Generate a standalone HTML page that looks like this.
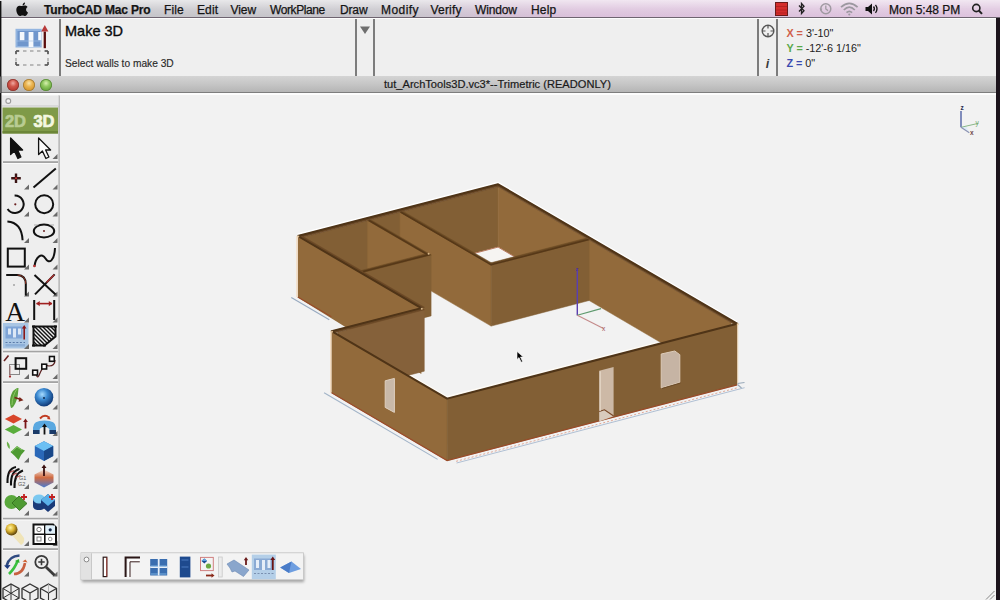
<!DOCTYPE html>
<html><head><meta charset="utf-8">
<style>
*{margin:0;padding:0;box-sizing:border-box}
html,body{width:1000px;height:600px;overflow:hidden;background:#f2f2f2;font-family:"Liberation Sans",sans-serif;position:relative}
.abs{position:absolute}
#menubar{left:0;top:0;width:1000px;height:18px;background:linear-gradient(rgba(255,255,255,0.6),rgba(255,255,255,0.15) 55%,rgba(255,255,255,0) 90%),linear-gradient(to right,#c6c6ca 0%,#c8c6cc 40%,#d2c2d4 48%,#dcc2dc 58%,#dec4de 100%);border-bottom:1px solid #6e6470}
#menubar .m{position:absolute;top:3px;font-size:12px;color:#141414;white-space:nowrap;letter-spacing:-0.4px;-webkit-text-stroke:0.25px #141414}
#opts{left:0;top:18px;width:1000px;height:58.3px;background:#efefef;border-top:1px solid #fcfcfc}
#title{left:0;top:76.3px;width:1000px;height:16.7px;background:linear-gradient(#d4d4d4,#c6c6c6 50%,#b5b5b5);border-bottom:1px solid #7e7e7e}
#canvas{left:0;top:93px;width:1000px;height:507px;background:#f2f2f2;border-top:2px solid #fdfdfd}
.vline{position:absolute;width:1.6px;background:#7c7c7c}
.tl{position:absolute;top:78.5px;width:12px;height:12px;border-radius:50%}
</style></head>
<body>
<div id="canvas" class="abs"></div>
<svg class="abs" style="left:0;top:0" width="1000" height="600" viewBox="0 0 1000 600">
<polyline points="297.8,234.1 498.1,182.4 737.1,321.8" fill="none" stroke="#ffffff" stroke-width="1.3" stroke-linejoin="round"/>
<polyline points="447.1,396.7 407.6,373.7" fill="none" stroke="#fffcf6" stroke-width="1.3" />
<polyline points="447.1,396.7 657.1,342.5" fill="none" stroke="#fffcf6" stroke-width="1.2" />
<polygon points="300.8,237.8 498.1,186.8 498.1,247.1 300.8,298.7" fill="#825f35" stroke="#825f35" stroke-width="0.5"/>
<polygon points="498.1,186.8 731.1,322.8 731.1,383.8 498.1,247.1" fill="#926a3b" stroke="#926a3b" stroke-width="0.5"/>
<polygon points="403.1,272.0 498.1,247.1 586.1,298.8 491.1,323.6" fill="#f6f4f2" stroke="#b87a60" stroke-width="1"/>
<polygon points="400.1,212.1 491.1,265.2 491.1,326.1 400.1,272.8" fill="#926a3b" stroke="#926a3b" stroke-width="0.5"/>
<polygon points="400.1,212.1 491.1,265.2 494.1,264.4 403.1,211.4" fill="#6a4a24" stroke="#6a4a24" stroke-width="0.5"/>
<polygon points="491.1,265.2 589.1,239.9 589.1,300.5 491.1,326.1" fill="#825f35" stroke="#825f35" stroke-width="0.5"/>
<polygon points="488.1,263.5 491.1,265.2 589.1,239.9 586.1,238.2" fill="#6a4a24" stroke="#6a4a24" stroke-width="0.5"/>
<polygon points="367.7,220.5 428.1,255.7 428.1,316.7 367.7,281.2" fill="#926a3b" stroke="#926a3b" stroke-width="0.5"/>
<polygon points="367.7,220.5 428.1,255.7 431.1,255.0 370.7,219.7" fill="#6a4a24" stroke="#6a4a24" stroke-width="0.5"/>
<polygon points="364.2,272.2 431.1,255.0 431.1,315.9 364.2,333.4" fill="#825f35" stroke="#825f35" stroke-width="0.5"/>
<polygon points="361.2,270.5 364.2,272.2 431.1,255.0 428.1,253.2" fill="#6a4a24" stroke="#6a4a24" stroke-width="0.5"/>
<polygon points="297.8,236.0 421.3,308.1 421.3,373.9 297.8,297.5" fill="#926a3b" />
<polygon points="337.6,332.2 424.3,309.8 424.3,371.2 337.6,393.8" fill="#85613a" stroke="#85613a" stroke-width="0.5"/>
<polygon points="331.6,331.2 447.1,398.6 447.1,460.6 331.6,392.8" fill="#926a3b" stroke="#926a3b" stroke-width="0.5"/>
<polygon points="447.1,398.6 737.1,323.7 737.1,384.8 447.1,460.6" fill="#825f35" stroke="#825f35" stroke-width="0.5"/>
<polygon points="297.8,236.0 300.8,237.8 501.1,186.1 498.1,184.3" fill="#6a4826" stroke="#6a4826" stroke-width="0.5"/>
<polygon points="495.1,185.1 734.1,324.5 737.1,323.7 498.1,184.3" fill="#6a4826" stroke="#6a4826" stroke-width="0.5"/>
<polygon points="297.8,236.0 421.3,308.1 424.3,307.3 300.8,235.2" fill="#6a4826" stroke="#6a4826" stroke-width="0.5"/>
<polygon points="331.6,331.2 334.6,333.0 424.3,309.8 421.3,308.1" fill="#6a4826" stroke="#6a4826" stroke-width="0.5"/>
<polyline points="297.8,236.0 498.1,184.3 737.1,323.7 447.1,398.6 331.6,331.2 421.3,308.1 297.8,236.0" fill="none" stroke="#4f3417" stroke-width="2.0" stroke-linejoin="round"/>
<polyline points="400.6,212.0 491.1,264.8 588.6,239.6" fill="none" stroke="#563818" stroke-width="1.5" />
<polyline points="368.7,220.2 428.1,254.9 363.2,271.6" fill="none" stroke="#563818" stroke-width="1.6" />
<circle cx="298.3" cy="236.6" r="1.0" fill="#d8b88c"/>
<circle cx="428.6" cy="253.8" r="1.0" fill="#d8b88c"/>
<circle cx="421.8" cy="308.7" r="1.0" fill="#d8b88c"/>
<circle cx="332.1" cy="331.8" r="1.0" fill="#d8b88c"/>
<circle cx="737.6" cy="324.3" r="1.0" fill="#d8b88c"/>
<polyline points="297.0,236.0 297.0,297.0" fill="none" stroke="#f4dcc0" stroke-width="1.4" />
<polyline points="330.8,331.2 330.8,392.8" fill="none" stroke="#f4dcc0" stroke-width="1.4" />
<polyline points="737.7,323.7 737.7,384.8" fill="none" stroke="#e8d0b0" stroke-width="1.0" />
<polyline points="297.8,297.0 331.3,316.6" fill="none" stroke="#9a4a28" stroke-width="1.1" />
<polyline points="331.6,392.8 447.1,460.6 737.1,384.8" fill="none" stroke="#9a4a28" stroke-width="1.2" />
<polyline points="291.3,297.5 329.3,319.8" fill="none" stroke="#98aac0" stroke-width="1.1" />
<polyline points="324.1,392.8 437.6,459.4" fill="none" stroke="#a2b4c8" stroke-width="1.1" />
<polyline points="456.1,461.3 738.1,387.6" fill="none" stroke="#e0a898" stroke-width="1.0" stroke-dasharray="2,2"/>
<polyline points="456.6,463.0 744.6,387.7" fill="none" stroke="#b0c0d4" stroke-width="1.0" />
<polyline points="737.5,383.5 744.5,382.5" fill="none" stroke="#98a8b8" stroke-width="1.1" />
<polyline points="737.5,384.5 741.5,388.0" fill="none" stroke="#98a8b8" stroke-width="1.1" />
<polygon points="599.2,370.8 613.6,367.0 613.6,415.8 604.5,409.5 599.2,411.0" fill="#cdb9a6" />
<polygon points="599.2,411.0 604.5,409.5 613.6,415.8 613.6,416.2 599.2,421.6" fill="#d9cbbd" />
<polyline points="599.2,411.5 604.5,409.8 613.6,416.0" fill="none" stroke="#7a4a2a" stroke-width="1.2" />
<polyline points="600.2,371.2 600.2,411.0" fill="none" stroke="#e6d8c8" stroke-width="1.2" />
<polygon points="661.2,354.0 674.8,351.0 679.8,354.7 679.8,382.4 661.2,387.8" fill="#c6b4a4" stroke="#dccbb8" stroke-width="1"/>
<polyline points="662.0,388.5 680.5,383.0" fill="none" stroke="#6a4a28" stroke-width="1.0" />
<polygon points="385.2,380.8 394.4,378.4 394.4,412.4 385.2,407.4" fill="#c9b9a9" stroke="#dfd0c0" stroke-width="1"/>
<line x1="577.3" y1="315.5" x2="577.3" y2="268.5" stroke="#5a3fb0" stroke-width="1.4"/>
<line x1="577.3" y1="315.3" x2="601" y2="308.6" stroke="#5e9a6e" stroke-width="1.1"/>
<line x1="577.3" y1="315.3" x2="603" y2="328.2" stroke="#c48a8a" stroke-width="1.1"/>
<text x="575.5" y="271" font-family="Liberation Sans" font-size="6" fill="#4a3090">z</text>
<text x="602" y="330.5" font-family="Liberation Sans" font-size="6.5" fill="#a05050">x</text>
<polygon points="517,351.5 517,359.5 519,357.6 521.2,362.2 522.6,361.5 520.5,357 523.3,357" fill="#000" stroke="#fff" stroke-width="0.6"/>

</svg>
<div id="menubar" class="abs">
  <svg class="abs" style="left:16px;top:2px" width="13" height="15" viewBox="0 0 13 15"><path d="M9 0.5c0.2 1.3-0.9 2.9-2.4 2.9C6.4 2 7.6 0.7 9 0.5z M6.3 4.1c0.8 0 1.6-0.6 2.6-0.6 0.6 0 1.9 0.2 2.7 1.5-2.2 1.3-1.9 4.5 0.4 5.4-0.5 1.4-1.6 3.6-3 3.6-1 0-1.3-0.6-2.5-0.6-1.3 0-1.6 0.6-2.6 0.6C2.2 14 0.3 10.6 0.3 7.8c0-2.6 1.7-4 3.3-4 1.1 0 1.9 0.3 2.7 0.3z" fill="#111"/></svg>
  <div class="m" style="left:44px;font-weight:bold;letter-spacing:-0.17px">TurboCAD Mac Pro</div>
  <div class="m" style="left:164px;letter-spacing:0.1px">File</div>
  <div class="m" style="left:197px;letter-spacing:0.1px">Edit</div>
  <div class="m" style="left:230.5px;letter-spacing:-0.05px">View</div>
  <div class="m" style="left:270px">WorkPlane</div>
  <div class="m" style="left:340px;letter-spacing:-0.15px">Draw</div>
  <div class="m" style="left:381px;letter-spacing:0.45px">Modify</div>
  <div class="m" style="left:430.5px;letter-spacing:0.2px">Verify</div>
  <div class="m" style="left:475px;letter-spacing:-0.15px">Window</div>
  <div class="m" style="left:531px;letter-spacing:0.2px">Help</div>
  <div class="m" style="left:889px;letter-spacing:0px">Mon 5:48 PM</div>
</div>
<div id="opts" class="abs">
  <div class="vline" style="left:59px;top:0;height:58px"></div>
  <div class="vline" style="left:355px;top:0;height:58px"></div>
  <div class="vline" style="left:373px;top:0;height:58px"></div>
  <div class="vline" style="left:757px;top:0;height:58px"></div>
  <div class="vline" style="left:776px;top:0;height:58px"></div>
  <div class="abs" style="left:65px;top:3.5px;font-size:14.5px;color:#0a0a0a;-webkit-text-stroke:0.35px #0a0a0a">Make 3D</div>
  <div class="abs" style="left:65px;top:38.5px;font-size:10.2px;color:#2a2a2a;-webkit-text-stroke:0.15px #2a2a2a">Select walls to make 3D</div>
</div>
<div id="title" class="abs">
  <div class="abs" style="left:384px;top:2px;font-size:11.1px;color:#1a1a1a;-webkit-text-stroke:0.2px #1a1a1a">tut_ArchTools3D.vc3*--Trimetric (READONLY)</div>
</div>
<svg class="abs" style="left:0;top:0" width="1000" height="600" viewBox="0 0 1000 600">
<rect x="1.5" y="95.5" width="57.5" height="505" fill="#eeeeee"/>
<rect x="58.5" y="95.5" width="1.2" height="505" fill="#a6a6a6"/>
<rect x="2" y="96" width="56.5" height="10" fill="#e8e8e8"/>
<rect x="2" y="105.5" width="56.5" height="1" fill="#c8c8c8"/>
<circle cx="8.3" cy="101" r="2.4" fill="#f4f4f4" stroke="#9a9a9a" stroke-width="1.1"/>
<rect x="2.5" y="107.5" width="55.5" height="26" fill="#7f9a48"/>
<rect x="2.5" y="131" width="55.5" height="2.5" fill="#6c8638"/>
<text x="5" y="127" font-family="Liberation Sans" font-weight="bold" font-size="16.5" fill="#b9cc92" stroke="#b9cc92" stroke-width="0.7" letter-spacing="-0.3">2D</text>
<text x="33.5" y="127" font-family="Liberation Sans" font-weight="bold" font-size="16.5" fill="#f4f8e0" stroke="#f4f8e0" stroke-width="0.7" letter-spacing="-0.3">3D</text>
<rect x="3" y="161.2" width="55" height="1.8" fill="#a4a4a4"/>
<rect x="3" y="163.0" width="55" height="1" fill="#fafafa"/>
<rect x="3" y="350.8" width="55" height="1.8" fill="#a4a4a4"/>
<rect x="3" y="352.6" width="55" height="1" fill="#fafafa"/>
<rect x="3" y="381.2" width="55" height="1.8" fill="#a4a4a4"/>
<rect x="3" y="383.0" width="55" height="1" fill="#fafafa"/>
<rect x="3" y="517.8" width="55" height="1.8" fill="#a4a4a4"/>
<rect x="3" y="519.5999999999999" width="55" height="1" fill="#fafafa"/>
<rect x="3" y="548.2" width="55" height="1.8" fill="#a4a4a4"/>
<rect x="3" y="550.0" width="55" height="1" fill="#fafafa"/>
<rect x="3" y="323" width="25.5" height="25.5" fill="#a9c6e4"/>
<polygon points="57.5,159 52.5,159 57.5,154" fill="#6a6a6a"/>
<polygon points="29,189.5 24,189.5 29,184.5" fill="#6a6a6a"/>
<polygon points="57.5,189.5 52.5,189.5 57.5,184.5" fill="#6a6a6a"/>
<polygon points="29,216.5 24,216.5 29,211.5" fill="#6a6a6a"/>
<polygon points="57.5,216.5 52.5,216.5 57.5,211.5" fill="#6a6a6a"/>
<polygon points="29,243 24,243 29,238" fill="#6a6a6a"/>
<polygon points="57.5,243 52.5,243 57.5,238" fill="#6a6a6a"/>
<polygon points="29,269.5 24,269.5 29,264.5" fill="#6a6a6a"/>
<polygon points="57.5,269.5 52.5,269.5 57.5,264.5" fill="#6a6a6a"/>
<polygon points="29,296.5 24,296.5 29,291.5" fill="#6a6a6a"/>
<polygon points="57.5,296.5 52.5,296.5 57.5,291.5" fill="#6a6a6a"/>
<polygon points="29,322.5 24,322.5 29,317.5" fill="#6a6a6a"/>
<polygon points="57.5,322.5 52.5,322.5 57.5,317.5" fill="#6a6a6a"/>
<polygon points="29,349 24,349 29,344" fill="#6a6a6a"/>
<polygon points="57.5,349 52.5,349 57.5,344" fill="#6a6a6a"/>
<polygon points="29,379 24,379 29,374" fill="#6a6a6a"/>
<polygon points="57.5,379 52.5,379 57.5,374" fill="#6a6a6a"/>
<polygon points="29,409.5 24,409.5 29,404.5" fill="#6a6a6a"/>
<polygon points="57.5,409.5 52.5,409.5 57.5,404.5" fill="#6a6a6a"/>
<polygon points="29,436 24,436 29,431" fill="#6a6a6a"/>
<polygon points="57.5,436 52.5,436 57.5,431" fill="#6a6a6a"/>
<polygon points="29,462.5 24,462.5 29,457.5" fill="#6a6a6a"/>
<polygon points="57.5,462.5 52.5,462.5 57.5,457.5" fill="#6a6a6a"/>
<polygon points="29,489 24,489 29,484" fill="#6a6a6a"/>
<polygon points="57.5,489 52.5,489 57.5,484" fill="#6a6a6a"/>
<polygon points="29,515.5 24,515.5 29,510.5" fill="#6a6a6a"/>
<polygon points="57.5,515.5 52.5,515.5 57.5,510.5" fill="#6a6a6a"/>
<polygon points="29,546 24,546 29,541" fill="#6a6a6a"/>
<polygon points="57.5,546 52.5,546 57.5,541" fill="#6a6a6a"/>
<polygon points="29,576.5 24,576.5 29,571.5" fill="#6a6a6a"/>
<polygon points="57.5,576.5 52.5,576.5 57.5,571.5" fill="#6a6a6a"/>
<rect x="0" y="1" width="1.4" height="599" fill="#111"/>
<rect x="0" y="76.5" width="1.4" height="16.5" fill="#6a6a6a"/>
<polygon points="10.6,138.0 10.6,154.5 14.4,151.0 17.9,158.5 20.9,157.0 17.6,150.0 22.6,150.0" fill="#111" stroke="#111" stroke-width="1.3" stroke-linejoin="round"/>
<polygon points="38.6,138.0 38.6,154.5 42.4,151.0 45.9,158.5 48.9,157.0 45.6,150.0 50.6,150.0" fill="#fafafa" stroke="#111" stroke-width="1.3" stroke-linejoin="round"/>
<path d="M11.2,178.2H20.8M16,173.4V183" stroke="#3a1414" stroke-width="2.4"/>
<circle cx="16" cy="178.2" r="1" fill="#d03030"/>
<line x1="33.5" y1="187.4" x2="55.8" y2="168.6" stroke="#111" stroke-width="2"/>
<path d="M14.6,195.6 A8.7,8.7 0 1 1 7.6,209" fill="none" stroke="#111" stroke-width="2"/>
<circle cx="15.3" cy="204.3" r="1.1" fill="#6a2020"/>
<circle cx="44.2" cy="204.2" r="9" fill="none" stroke="#111" stroke-width="2"/>
<path d="M7.4,221.6 Q21.5,222.5 22.6,240.2" fill="none" stroke="#111" stroke-width="2"/>
<ellipse cx="44" cy="231" rx="10.2" ry="6.4" fill="none" stroke="#111" stroke-width="2"/>
<circle cx="44" cy="231" r="1" fill="#6a2020"/>
<path d="M34,225H38M50,225H54" stroke="#999" stroke-width="0.8"/>
<rect x="7.8" y="248.6" width="17" height="18" fill="none" stroke="#111" stroke-width="2"/>
<path d="M34.4,266.6 C35.8,256 42,252.5 45.5,258.5 C49,264.5 54.5,261 55,248" fill="none" stroke="#111" stroke-width="2"/>
<circle cx="34.4" cy="266" r="1.2" fill="#c03030"/>
<path d="M6.2,275 H17.5 Q25.8,275.5 25.8,284 V295.6" fill="none" stroke="#111" stroke-width="2"/>
<path d="M17.5,275 Q25.8,275.5 25.8,284" fill="none" stroke="#8a3020" stroke-width="1"/>
<circle cx="14" cy="285" r="0.7" fill="#555"/>
<line x1="34.5" y1="275" x2="55.6" y2="294.5" stroke="#111" stroke-width="2"/>
<line x1="35" y1="294.4" x2="54.6" y2="274.4" stroke="#111" stroke-width="2"/>
<line x1="46.5" y1="282.5" x2="54.2" y2="274.8" stroke="#b03030" stroke-width="1.3"/>
<text x="5.3" y="321.3" font-family="Liberation Serif" font-size="27.5" fill="#111">A</text>
<path d="M34.2,300V320M54.2,300V320" stroke="#111" stroke-width="2"/>
<path d="M36.5,303.6H52" stroke="#a02020" stroke-width="1.6"/>
<path d="M36.2,303.6l3.5,-2.6v5.2z M52.3,303.6l-3.5,-2.6v5.2z" fill="#a02020"/>
<rect x="5.5" y="326.5" width="17" height="12" fill="#7ea4d6"/>
<path d="M8,328.5h3v6h-3z M13,328.5h3v9h-3z M18,328.5h3v6h-3z" fill="#dce8f6"/>
<path d="M24.2,339.5V327.5" stroke="#8a1818" stroke-width="1.6"/><path d="M24.2,325l-2.3,3.4h4.6z" fill="#8a1818"/>
<path d="M5.5,342.5H25" stroke="#5a7aa8" stroke-width="1.2" stroke-dasharray="2,1.6"/>
<rect x="5.5" y="344" width="19.5" height="2.5" fill="#8eb0d8"/>
<defs><clipPath id="hc"><polygon points="33.5,326.5 55.5,326.5 55.5,336.5 44.5,345.5 33.5,345.5"/></clipPath></defs>
<g clip-path="url(#hc)" stroke="#111" stroke-width="1.4"><line x1="14" y1="326" x2="34" y2="346"/><line x1="18" y1="326" x2="38" y2="346"/><line x1="22" y1="326" x2="42" y2="346"/><line x1="26" y1="326" x2="46" y2="346"/><line x1="30" y1="326" x2="50" y2="346"/><line x1="34" y1="326" x2="54" y2="346"/><line x1="38" y1="326" x2="58" y2="346"/><line x1="42" y1="326" x2="62" y2="346"/><line x1="46" y1="326" x2="66" y2="346"/><line x1="50" y1="326" x2="70" y2="346"/><line x1="54" y1="326" x2="74" y2="346"/></g>
<polygon points="33.5,326.5 55.5,326.5 55.5,336.5 44.5,345.5 33.5,345.5" fill="none" stroke="#111" stroke-width="2"/>
<path d="M32,326.5h3M54,326.5h3M32,345.5h3M43,345.5h3" stroke="#111" stroke-width="2.2"/>
<rect x="9.5" y="364.5" width="10" height="10" fill="none" stroke="#888" stroke-width="1"/>
<rect x="15.6" y="358.2" width="10.6" height="10.6" fill="none" stroke="#111" stroke-width="2"/>
<path d="M4,361 L8.5,355.5" stroke="#6a2020" stroke-width="1.6"/>
<circle cx="10" cy="376.6" r="1.1" fill="#a02020"/>
<path d="M10,376.6V366" stroke="#a06060" stroke-width="0.8"/>
<path d="M36.5,375 Q37.5,380 40.5,372 Q44,364 49,366 Q55,366 55,360" fill="none" stroke="#5a2020" stroke-width="1.2"/>
<rect x="32.7" y="370.2" width="4.8" height="4.8" fill="#fff" stroke="#111" stroke-width="1.6"/>
<rect x="41.8" y="364.2" width="4.8" height="4.8" fill="#fff" stroke="#111" stroke-width="1.6"/>
<rect x="49.5" y="356.5" width="4.8" height="4.8" fill="#fff" stroke="#111" stroke-width="1.6"/>
<defs>
<radialGradient id="gsph" cx="0.4" cy="0.35" r="0.65"><stop offset="0" stop-color="#a8dcff"/><stop offset="0.45" stop-color="#3a88d0"/><stop offset="1" stop-color="#103a78"/></radialGradient>
<radialGradient id="gyel" cx="0.4" cy="0.35" r="0.65"><stop offset="0" stop-color="#fff4a0"/><stop offset="0.5" stop-color="#d8b030"/><stop offset="1" stop-color="#5a4008"/></radialGradient>
<linearGradient id="gbox" x1="0" y1="0" x2="0" y2="1"><stop offset="0" stop-color="#f0e0d8"/><stop offset="0.45" stop-color="#d06a40"/><stop offset="1" stop-color="#4a7ad0"/></linearGradient>
</defs>
<path d="M11,408 C9,402 10,396 13,391 C15,389 17,387.5 18.5,388 C18,393 18,398 15.5,403 C14,406 12.5,408 11,408z" fill="#5aa03a"/>
<path d="M12,405 C12,399 14,393 17,389" stroke="#8ac860" stroke-width="1" fill="none"/>
<path d="M14.5,397.5 L21,399.5" stroke="#7a2418" stroke-width="1.8"/><path d="M23.5,400.3l-4,-3.2l-0.9,4.6z" fill="#7a2418"/>
<circle cx="44" cy="397.2" r="9.3" fill="url(#gsph)"/>
<circle cx="44" cy="398" r="0.9" fill="#0a2040"/>
<polygon points="4.8,419 13.5,414.5 22,419 13.5,423.5" fill="#d8452a"/>
<polygon points="4.8,429.5 13.5,425 22,429.5 13.5,434" fill="#5aad3c"/>
<path d="M25.5,428.5V421" stroke="#7a1818" stroke-width="1.8"/><path d="M25.5,418.5l-2.4,3.4h4.8z" fill="#7a1818"/>
<path d="M33,434 V427.5 Q33,420.5 44.5,420.5 Q56,420.5 56,427.5 V434 H49.5 V430.5 Q49.5,427 44.5,427 Q39.5,427 39.5,430.5 V434Z" fill="#5aa8e0"/>
<path d="M33,430 H39.5 V434 H33Z M49.5,430 H56 V434 H49.5Z" fill="#1a3a68"/>
<path d="M40,418.5 Q44.5,413.5 49,417.5" fill="none" stroke="#c03a20" stroke-width="2"/><path d="M50.5,419.5l-3.5,-0.5l2.3,-2.8z" fill="#c03a20"/>
<path d="M44.5,434.5V426" stroke="#111" stroke-width="1.8"/><path d="M44.5,423.5l-2.5,3.5h5z" fill="#111"/>
<path d="M7,441.5 C9,443 10.5,446 9.5,449 C7.5,447.5 6.5,444.5 7,441.5z" fill="#6ab048"/>
<path d="M10.5,452 L17,446 Q21,449 25,450.5 Q21,454 18.5,460 Q14,455 10.5,452z" fill="#4e9a32"/>
<path d="M12,451.5 L17,447 Q20,449 22,450" stroke="#90d070" stroke-width="0.8" fill="none"/>
<polygon points="44,441.2 53.2,446 53.2,456 44,461 34.8,456 34.8,446" fill="#2a68b8"/>
<polygon points="44,441.2 53.2,446 44,451 34.8,446" fill="#6cc0f4"/>
<polygon points="44,451 53.2,446 53.2,456 44,461" fill="#1a4888"/>
<path d="M16,467 Q7,468.5 7.5,483 M19.5,469 Q10.5,471 11,485.5 M23,470.5 Q14,473.5 14.5,488" fill="none" stroke="#111" stroke-width="2.1"/>
<path d="M9.5,472.5 L14,470.5 M12.5,475 L17,473 M16,477.5 L20.5,475.5" stroke="#b03030" stroke-width="1.3" opacity="0.8"/>
<text x="19" y="480" font-family="Liberation Sans" font-size="5.5" fill="#555">G1</text>
<text x="18" y="486" font-family="Liberation Sans" font-size="5.5" fill="#555">G2</text>
<polygon points="44,469.5 53.5,474.5 53.5,482.5 44,487.5 34.5,482.5 34.5,474.5" fill="url(#gbox)"/>
<path d="M44,476V467" stroke="#3a1010" stroke-width="1.8"/><path d="M44,464.5l-2.5,3.5h5z" fill="#3a1010"/>
<circle cx="11.5" cy="502" r="7" fill="#5aa83c"/>
<polygon points="12,503 19,496 27,503.5 19.5,510.5" fill="#4e9a32" stroke="#2e6a1a" stroke-width="0.8"/>
<path d="M21,497H27M24,494V500" stroke="#c02020" stroke-width="1.8"/>
<path d="M33,499 v7 q0,4 6,4 q6,0 6,-4 v-7z" fill="#1a3a78"/>
<ellipse cx="39" cy="499" rx="6" ry="4.5" fill="#7ac8f0"/>
<polygon points="41,500 48,494 55,500 55,506 48,512 41,506" fill="#1a3a78"/>
<polygon points="41,500 48,494 55,500 48,506" fill="#5ab0e8"/>
<path d="M49,497H55M52,494V500" stroke="#c02020" stroke-width="1.8"/>
<path d="M10,533 L21,545 Q25,543 24,538 L15,526z" fill="#f0e2b0" opacity="0.9"/>
<circle cx="11.5" cy="529.5" r="6" fill="url(#gyel)"/>
<path d="M33.5,524.5 H53 L56,527.5 V544 H33.5Z" fill="#fff" stroke="#111" stroke-width="2"/>
<path d="M44.8,524.5V544M33.5,534.2H56" stroke="#111" stroke-width="1.6"/>
<rect x="45.5" y="525.5" width="9.5" height="8" fill="#dff0fa"/>
<circle cx="39" cy="529.5" r="2.2" fill="none" stroke="#666" stroke-width="0.9"/>
<circle cx="50.2" cy="529.8" r="1.6" fill="#102040"/>
<rect x="37" y="537" width="4" height="4" fill="none" stroke="#777" stroke-width="0.9"/>
<circle cx="50.2" cy="539" r="1.8" fill="none" stroke="#888" stroke-width="0.9"/>
<path d="M19.5,555.5 Q9,556 6.5,566" fill="none" stroke="#2e4a80" stroke-width="2.6"/>
<path d="M4,565.5l3.5,3.5l3,-4z" fill="#1a3a80"/>
<path d="M9,574 Q15,568 17.5,561" fill="none" stroke="#3ac040" stroke-width="2.6"/>
<path d="M15,561l4,-2l0.5,4z" fill="#30b030"/>
<path d="M14,574 Q23,574 25,563" fill="none" stroke="#c86040" stroke-width="2.6"/>
<path d="M22.5,561.5l3,-2l2,3z" fill="#d06030"/>
<circle cx="41.5" cy="562" r="6.2" fill="none" stroke="#3a3a3a" stroke-width="1.8"/>
<path d="M38.3,562H44.7M41.5,558.8V565.2" stroke="#3a3a3a" stroke-width="1.6"/>
<path d="M46,567 L54.5,575.2" stroke="#3a3a3a" stroke-width="2.8"/>
<polygon points="11,584 19,588.5 19,598 11,602.5 3,598 3,588.5" fill="none" stroke="#333" stroke-width="1.3"/>
<polygon points="30,584 38,588.5 38,598 30,602.5 22,598 22,588.5" fill="none" stroke="#333" stroke-width="1.3"/>
<polygon points="48.5,584 56.5,588.5 56.5,598 48.5,602.5 40.5,598 40.5,588.5" fill="none" stroke="#333" stroke-width="1.3"/>
<path d="M11,584V602.5M3,588.5L19,598M19,588.5L3,598" stroke="#333" stroke-width="1"/>
<path d="M22,588.5L30,593L38,588.5M30,593V602.5" stroke="#333" stroke-width="1.1" fill="none"/>
<path d="M40.5,588.5L48.5,593L56.5,588.5M48.5,593V602.5" stroke="#333" stroke-width="1.1" fill="none"/>
<path d="M48.5,584V593" stroke="#aaa" stroke-width="0.8"/>

<rect x="15.5" y="28.8" width="26.2" height="18.7" fill="#93b5e0"/>
<rect x="17.5" y="31" width="22.5" height="15" fill="#6f96cc"/>
<path d="M19.8,32h4.6v8.2h-4.6z M28.6,32h4.8v15h-4.8z M38.2,32h3.2v8.2h-3.2z" fill="#f4f8fc"/>
<rect x="15.5" y="40.5" width="26.2" height="1" fill="#a8c4e8" opacity="0.6"/>
<path d="M44.8,48.2V31.5" stroke="#5a0e0e" stroke-width="2.3"/>
<path d="M44.8,25l-3.6,6.4h7.2z" fill="#b83a3a"/>
<path d="M16,51 V65 M48,51 V65 M16,51 H48 M16,65 H48" stroke="#a8a8a8" stroke-width="1.4" stroke-dasharray="3.5,3.5" fill="none"/>
<path d="M16,51h3M16,51v3M48,51h-3M48,51v3M16,65h3M16,65v-3M48,65h-3M48,65v-3" stroke="#555" stroke-width="1.6"/>
<path d="M360,26.5h10l-5,7.5z" fill="#6e6e6e"/>
<circle cx="768" cy="31" r="5.8" fill="none" stroke="#555" stroke-width="1.4"/>
<path d="M768,25.5v3M768,33v3M762.5,31h3M770.5,31h3" stroke="#555" stroke-width="1.2"/>
<text x="765.8" y="67.5" font-family="Liberation Sans" font-style="italic" font-weight="bold" font-size="12.5" fill="#3a3a3a">i</text>
<text x="786.4" y="36.5" font-family="Liberation Sans" font-size="10.8" fill="#222"><tspan fill="#d0604a" font-weight="bold">X = </tspan>3'-10"</text>
<text x="786.4" y="51.5" font-family="Liberation Sans" font-size="10.8" fill="#222"><tspan fill="#5aa84a" font-weight="bold">Y = </tspan>-12'-6 1/16"</text>
<text x="786.4" y="66.8" font-family="Liberation Sans" font-size="10.8" fill="#222"><tspan fill="#3a4ab0" font-weight="bold">Z = </tspan>0"</text>
<rect x="775.5" y="2.5" width="12" height="13" fill="#d42c2c" stroke="#6a1a1a" stroke-width="1"/>
<path d="M776,6.5h11M776,10h11M776,13h11" stroke="#a81e1e" stroke-width="0.7"/>
<path d="M799,5.5 L804,10.8 L801.5,13.5 V3.5 L804,6.2 L799,11.5" fill="none" stroke="#222" stroke-width="1.3"/>
<circle cx="825.8" cy="8.8" r="5" fill="none" stroke="#a09aa2" stroke-width="1.5"/>
<path d="M825.8,5.5V9l2.2,1.6" fill="none" stroke="#a09aa2" stroke-width="1.3"/>
<path d="M819.5,8.5l1.3,2.5l1.6,-2.2z" fill="#a09aa2"/>
<path d="M841,7.2 Q849.3,-0.5 857.6,7.2 M843.8,10 Q849.3,4.5 854.8,10 M846.5,12.6 Q849.3,10 852.1,12.6" fill="none" stroke="#9c98a0" stroke-width="1.7"/>
<circle cx="849.3" cy="14.5" r="1.1" fill="#9c98a0"/>
<path d="M865.5,7h2.5l4,-3.5v11l-4,-3.5h-2.5z" fill="#111"/>
<path d="M873.5,6.5 Q875.3,8.8 873.5,11 M875.5,4.8 Q878.5,8.8 875.5,12.8" fill="none" stroke="#111" stroke-width="1.3"/>
<circle cx="976.3" cy="8" r="3.6" fill="none" stroke="#222" stroke-width="1.6"/>
<path d="M978.8,10.5l3.2,3.4" stroke="#222" stroke-width="2"/>
<polygon points="961,127.3 969.3,132.7 966,125.8" fill="#d8eaf8" opacity="0.8"/>
<path d="M961,127.3V111" stroke="#5a6aa8" stroke-width="1.5"/>
<path d="M961,127.3L978.5,123.3" stroke="#8ab888" stroke-width="1"/>
<path d="M961,127.3L969.3,132.7" stroke="#8a90b0" stroke-width="1.1"/>
<text x="960.5" y="109.5" font-family="Liberation Sans" font-weight="bold" font-size="6.5" fill="#2a2a50">z</text>
<text x="975.5" y="125" font-family="Liberation Sans" font-size="6.5" fill="#70a870">y</text>
<text x="970" y="134.5" font-family="Liberation Sans" font-weight="bold" font-size="6.5" fill="#704848">x</text>
<path d="M986,599.5L994.5,591M990,599.5L994.5,595" stroke="#888" stroke-width="1"/>

<defs><filter id="sh" x="-10%" y="-30%" width="120%" height="180%"><feGaussianBlur stdDeviation="1.6"/></filter></defs>
<rect x="82" y="555" width="222" height="27" fill="#000" opacity="0.35" filter="url(#sh)"/>
<rect x="81" y="552.8" width="222.5" height="27" fill="#f3f3f3" stroke="#c4c4c4" stroke-width="0.8"/>
<rect x="81.4" y="553.2" width="10" height="26.2" fill="#e2e2e2"/>
<rect x="91.2" y="553.2" width="0.8" height="26.2" fill="#c0c0c0"/>
<circle cx="86.5" cy="559.5" r="2.4" fill="#fafafa" stroke="#8a8a8a" stroke-width="1"/>
<rect x="103.2" y="557.2" width="3.6" height="19.4" fill="#fff" stroke="#2a1818" stroke-width="1.2"/>
<path d="M106.8,557.5V576.5" stroke="#c04a40" stroke-width="0.8"/>
<path d="M125.6,577V557.4H140" fill="none" stroke="#2a1616" stroke-width="2"/>
<path d="M128.6,577V560.4H139.8" fill="none" stroke="#fff" stroke-width="1.6"/>
<path d="M130,577V561.8H139.8" fill="none" stroke="#3a2020" stroke-width="1"/>
<rect x="150.2" y="559" width="17" height="16.5" fill="#3a6eb0"/>
<path d="M158.7,559V575.5M150.2,567.2H167.2" stroke="#e8f0f8" stroke-width="1.8"/>
<path d="M151,566h7M159.5,566h7M151,574h7M159.5,574h7" stroke="#7ab0e0" stroke-width="1.2"/>
<rect x="179.8" y="556.6" width="10.6" height="20.8" fill="#1e4a8e"/>
<path d="M181.5,560h7M181.5,567h7" stroke="#4a7ac0" stroke-width="1"/>
<rect x="200.5" y="557.4" width="12.8" height="13.2" fill="none" stroke="#d08080" stroke-width="1"/>
<path d="M201.5,561l2.8,-2.4l2.8,2.4l-2.8,2.4z" fill="#1a4a90"/><path d="M201.5,561l2.8,-2.4l2.8,2.4z" fill="#5aa0e0"/>
<circle cx="208.5" cy="566" r="2.6" fill="#6aa840"/>
<path d="M206,575.5h6" stroke="#8a2a1a" stroke-width="1.8"/><path d="M214.5,575.5l-3,-2.2v4.4z" fill="#8a2a1a"/>
<rect x="218.4" y="557" width="3.8" height="20" fill="#ececec" stroke="#c8c8c8" stroke-width="0.8"/>
<polygon points="227,564 234,560 249,570 243.5,576.5 235,571 232,572 230,568" fill="#8aa6cc" stroke="#6a88b4" stroke-width="0.6"/>
<path d="M246,565V560" stroke="#6a1a1a" stroke-width="1.8"/><path d="M246,557l-2.2,3.2h4.4z" fill="#6a1a1a"/>
<rect x="251.8" y="554.6" width="24" height="24.6" fill="#b4cfe8"/>
<rect x="254" y="558.5" width="18" height="11.5" fill="#8aaad4"/>
<path d="M256,560h3v8h-3z M262,560h3v10h-3z M267.5,560h3v8h-3z" fill="#e6eef8"/>
<path d="M272.8,570V559.5" stroke="#6a1414" stroke-width="1.8"/><path d="M272.8,556.5l-2.4,3.4h4.8z" fill="#6a1414"/>
<path d="M254,573.5H274" stroke="#7a90b0" stroke-width="1" stroke-dasharray="2,1.5"/>
<polygon points="280.2,567.5 291.5,561.4 301,569 289,573" fill="#6e9ee0"/>
<polygon points="280.2,567.5 291.5,561.4 289,573" fill="#4a7cc8"/>

</svg>
<div class="tl" style="left:7.3px;background:radial-gradient(circle at 50% 35%,#f0a8a0 0%,#d0584c 35%,#b83a32 70%,#8a2a26 100%);box-shadow:inset 0 0 0 0.8px #8a3a34"></div>
<div class="tl" style="left:23.3px;background:radial-gradient(circle at 50% 35%,#fbe4a8 0%,#eab452 35%,#d8982e 70%,#9a6a20 100%);box-shadow:inset 0 0 0 0.8px #a07a3a"></div>
<div class="tl" style="left:40px;background:radial-gradient(circle at 50% 35%,#d8f0b0 0%,#90c860 35%,#6aa83e 70%,#447a24 100%);box-shadow:inset 0 0 0 0.8px #5a8a3a"></div>
<div class="abs" style="left:995.6px;top:18px;width:4.4px;height:582px;background:#1c141c"></div>
</body></html>
